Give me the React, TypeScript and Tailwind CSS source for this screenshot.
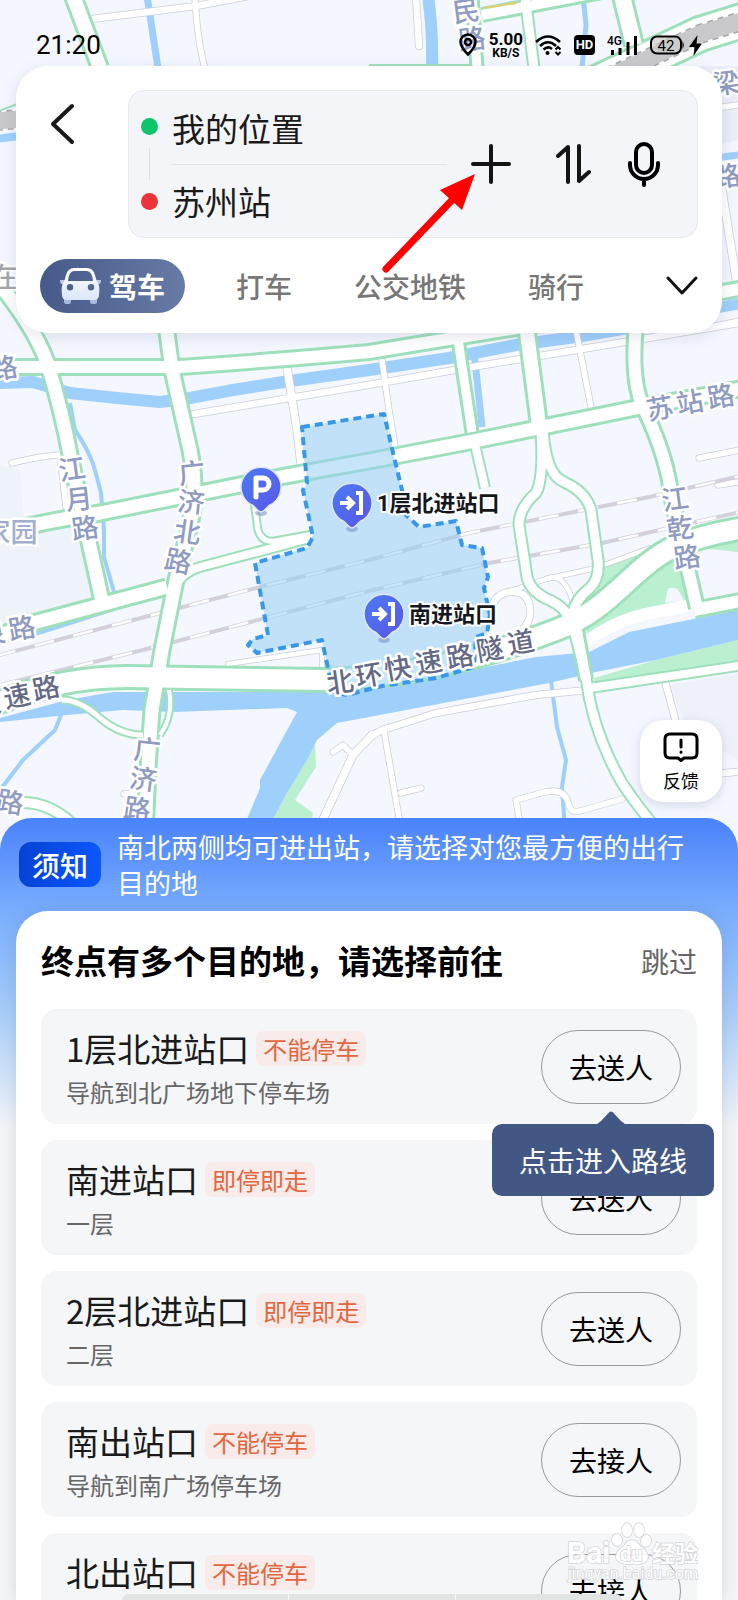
import { useState } from "react";

type Road = { d: string; w: number };

const MAIN_ROADS: Road[] = [
    { d: "M73 -4L100 68", w: 20 },
    { d: "M472 -4L477 68", w: 15 },
    { d: "M482 15L602 -8", w: 16 },
    { d: "M525 -4L534 68", w: 13 },
    { d: "M622 -4L634 45", w: 22 },
    { d: "M590 86L700 34L745 20", w: 38 },
    { d: "M-4 280Q33 325 47 362Q62 410 72 465L104 610", w: 19 },
    { d: "M10 367L180 367Q280 360 369 352L516 328L745 288", w: 18 },
    { d: "M166 325L172 370L190 450Q198 490 190 525L176 580L162 650L152 710L148 767L145 835", w: 19 },
    { d: "M-5 534Q50 520 100 513L180 497L280 477L369 461L469 442L636 408L745 388", w: 19 },
    { d: "M458 338L461 360L472 432", w: 15 },
    { d: "M474 440L485 488", w: 12 },
    { d: "M526 325L539 425", w: 20 },
    { d: "M541 430Q544 478 536 493Q519 508 519 525L527 577Q530 590 545 598Q570 608 574 630L586 677Q592 730 622 783Q640 810 662 835", w: 13 },
    { d: "M543 430Q546 475 564 482Q586 492 591 510L598 560Q600 578 590 588Q574 600 572 618", w: 13 },
    { d: "M575 620L586 680", w: 16 },
    { d: "M636 325Q630 385 646 413Q668 460 672 500L697 608", w: 18 },
    { d: "M-5 704Q60 677 127 677L327 680Q440 675 556 630C610 610 630 570 670 549Q700 535 745 528", w: 26 },
    { d: "M694 610L745 600", w: 18 },
    { d: "M590 688L745 665", w: 12 },
    { d: "M-5 637L33 623L167 587", w: 19 },
    { d: "M172 592Q180 573 200 567L310 538", w: 12 },
    { d: "M253 495L258 530Q262 543 275 541L313 534", w: 9 },
    { d: "M10 803Q50 798 78 830", w: 13 },
    { d: "M62 700Q80 700 100 718Q120 735 143 735", w: 9 },
    { d: "M169 690Q174 715 160 735", w: 8 },
];

const SIDE_ROADS: Road[] = [
    { d: "M92 19L196 6L260 -6", w: 8 },
    { d: "M195 -4Q197 40 205 68", w: 7 },
    { d: "M416 -4L419 46", w: 8 },
    { d: "M715 108L745 104", w: 7 },
    { d: "M722 190L738 290", w: 9 },
    { d: "M715 326L745 320", w: 7 },
    { d: "M12 463Q40 456 60 455L66 507", w: 7 },
    { d: "M194 414L290 398L386 382L466 368L576 350L745 322", w: 8 },
    { d: "M287 368L297 430L301 464", w: 9 },
    { d: "M382 360L389 410L395 447", w: 7 },
    { d: "M576 330L591 407", w: 7 },
    { d: "M699 458L745 449", w: 7 },
    { d: "M718 485L745 481", w: 7 },
    { d: "M366 742Q376 730 392 727L436 713L536 695L588 690", w: 8 },
    { d: "M384 731L402 835", w: 7 },
    { d: "M401 793L421 788", w: 7 },
    { d: "M522 835L516 800L545 792Q564 788 568 802Q570 814 580 811L622 799", w: 7 },
    { d: "M666 685L678 730", w: 8 },
    { d: "M715 774L745 771", w: 8 },
    { d: "M372 735L353 755L318 830", w: 9 },
    { d: "M353 755L343 745L333 752", w: 7 },
    { d: "M492 612Q492 596 508 592Q528 590 530 608Q532 622 520 632", w: 8 },
    { d: "M508 592L546 579Q566 570 575 610", w: 6 },
    { d: "M546 579L596 568L650 548", w: 6 },
    { d: "M228 664L322 650L322 668", w: 6 },
    { d: "M124 794L145 792", w: 7 },
];

const WATER: Road[] = [
    { d: "M147 -4L158 68", w: 7 },
    { d: "M428 -4Q433 30 432 68", w: 12 },
    { d: "M583 -4L586 25L582 68", w: 5 },
    { d: "M-4 139L20 136", w: 8 },
    { d: "M715 158L745 154", w: 7 },
    { d: "M715 308L745 303", w: 11 },
    { d: "M-4 383L33 382L70 393L117 398L160 402L190 398L233 390L283 382L369 370L449 358L516 345L576 337L640 326", w: 12 },
    { d: "M474 352L482 427", w: 7 },
    { d: "M70 403L75 430Q90 452 95 470L101 493L104 530L104 557L114 592", w: 4 },
    { d: "M35 634Q80 620 116 608", w: 4 },
    { d: "M63 710L55 730L23 760L0 790", w: 4 },
    { d: "M551 680L557 727L566 760L562 787L565 830", w: 4 },
];

const RAILS = [
    "M-4 656L160 613L260 587L369 560L469 533L649 497L745 475",
    "M-4 686L143 650L369 591L489 563L602 543L745 511",
];

const STATION =
    "M302 427L384 414L394 457L402 490L406 515L419 527L456 521L462 545L482 548L488 577L484 588L490 615L487 633L476 637L474 667L436 678L382 686L347 695L333 692L322 640L257 653L248 645L253 639L268 635L255 563L307 548L313 537L303 490L307 483Z";

// one glyph per entry: text, x, y, rotation
type Glyph = [string, number, number, number];

const ROAD_LABELS: Glyph[] = [
    ["民", 466, 12, -8],
    ["路", 472, 40, -8],
    ["梁", 726, 84, -8],
    ["路", 727, 177, -8],
    ["路", 4, 369, -10],
    ["江", 72, 470, -8],
    ["月", 79, 500, -6],
    ["路", 85, 529, -8],
    ["广", 192, 474, -6],
    ["济", 191, 503, 6],
    ["北", 187, 533, 8],
    ["路", 178, 562, 12],
    ["苏", 660, 409, -10],
    ["站", 690, 403, -10],
    ["路", 721, 397, -10],
    ["江", 675, 500, -8],
    ["乾", 680, 529, -8],
    ["路", 687, 558, -8],
    ["泉", -8, 635, -10],
    ["路", 22, 629, -10],
    ["广", 147, 751, 6],
    ["济", 143, 780, 8],
    ["路", 137, 810, 8],
    ["路", 10, 803, 10],
];

const EXPRESSWAY_LABELS: Glyph[] = [
    ["快", -13, 705, -12],
    ["速", 17, 697, -12],
    ["路", 46, 689, -12],
    ["北", 340, 683, -8],
    ["环", 369, 676, -10],
    ["快", 398, 669, -10],
    ["速", 429, 663, -10],
    ["路", 460, 657, -10],
    ["隧", 490, 650, -10],
    ["道", 521, 643, -10],
];

const AREA_LABELS: Glyph[] = [
    ["家", -3, 533, 0],
    ["园", 24, 533, 0],
];

const OTHER_TABS = ["打车", "公交地铁", "骑行"];

const DESTINATIONS = [
    { name: "1层北进站口", tag: "不能停车", note: "导航到北广场地下停车场", action: "去送人" },
    { name: "南进站口", tag: "即停即走", note: "一层", action: "去送人" },
    { name: "2层北进站口", tag: "即停即走", note: "二层", action: "去送人" },
    { name: "南出站口", tag: "不能停车", note: "导航到南广场停车场", action: "去接人" },
    { name: "北出站口", tag: "不能停车", note: "导航到北广场停车场", action: "去接人" },
];

function Glyphs({ items, fill }: { items: Glyph[]; fill: string }) {
    return (
        <g
            fill={fill}
            stroke="#fff"
            strokeWidth={5}
            strokeLinejoin="round"
            paintOrder="stroke"
            fontSize={27}
            fontWeight={500}
            textAnchor="middle"
            dominantBaseline="central"
        >
            {items.map(([ch, x, y, r], i) => (
                <text key={i} x={x} y={y} transform={`rotate(${r} ${x} ${y})`}>
                    {ch}
                </text>
            ))}
        </g>
    );
}

function Pin({ x, y, kind }: { x: number; y: number; kind: "parking" | "entry" }) {
    return (
        <g transform={`translate(${x} ${y})`}>
            <ellipse cx="0" cy="26" rx="6" ry="3" fill="#7f93c4" opacity="0.6" />
            <path
                d="M0 25Q-2 25 -8 18.500A20 20 0 1 1 8 18.500Q2 25 0 25Z"
                fill="url(#pin)"
                stroke="#dfe6fb"
                strokeWidth="1.500"
            />
            {kind === "parking" ? (
                <path d="M-5 10V-9H2A5.500 5.500 0 0 1 2 3H-5" fill="none" stroke="#fff" strokeWidth="5" strokeLinejoin="round" strokeLinecap="round" />
            ) : (
                <path d="M-12 0H0M-5 -6L1 0L-5 6M4 -10H9V10H4" fill="none" stroke="#fff" strokeWidth="4" />
            )}
        </g>
    );
}

function MapCanvas() {
    return (
        <svg
            viewBox="0 0 738 840"
            preserveAspectRatio="xMidYMin slice"
            className="absolute inset-x-0 top-0 h-[840px] w-full font-[Roboto,'Noto_Sans_CJK_SC',sans-serif]"
            aria-label="地图"
        >
            <defs>
                <linearGradient id="pin" x1="0" y1="0" x2="1" y2="1">
                    <stop offset="0" stopColor="#4b7cf3" />
                    <stop offset="1" stopColor="#5a55e6" />
                </linearGradient>
            </defs>
            <rect width="738" height="840" fill="#f4f7fe" />
            <path d="M0 465L20 470L25 535L90 525L100 600L0 625Z" fill="#eef2f9" />
            <path d="M666 685L738 674V760L690 730Z" fill="#eef1f8" />
            <path d="M700 66H738V140L700 150Z" fill="#e9eef8" />

            {/* parks */}
            <g fill="#baf0d0">
                <path d="M602 568L672 542L684 565L692 607L640 618L589 640L582 620Z" />
                <path d="M594 678L656 660L738 640V662L592 688Z" />
                <path d="M315 743L316 767L295 800L313 813L308 840H262L287 793Z" />
                <path d="M700 548L738 540V552Z" />
            </g>
            <path d="M668 589Q674 586 678 590Q682 596 684 601L676 602L665 603Z" fill="#f4f7fe" />

            {/* water */}
            <g fill="none" stroke="#9fd0fc" strokeLinejoin="round">
                {WATER.map((r) => (
                    <path key={r.d} d={r.d} strokeWidth={r.w} />
                ))}
            </g>
            <path
                d="M0 718L67 700L113 692L330 692L400 684L536 657L589 652L629 632L738 610V640L656 660L596 672L549 683L512 690L369 717L337 723L317 740L307 760L287 793L262 840H240L247 819L260 788L260 780L297 712L287 708L173 712L123 710L67 715L0 722Z"
                fill="#9fd0fc"
            />

            {/* side streets */}
            <g fill="none" stroke="#ccced8" strokeLinecap="round" strokeLinejoin="round">
                {SIDE_ROADS.map((r) => (
                    <path key={r.d} d={r.d} strokeWidth={r.w} />
                ))}
            </g>
            <g fill="none" stroke="#fff" strokeLinecap="round" strokeLinejoin="round">
                {SIDE_ROADS.map((r) => (
                    <path key={r.d} d={r.d} strokeWidth={r.w - 1.5} />
                ))}
            </g>
            <path d="M586 642Q612 622 645 614L692 605" fill="none" stroke="#fff" strokeWidth="12" />

            {RAILS.map((d) => (
                <g key={d} fill="none">
                    <path d={d} stroke="#d3d0dc" strokeWidth="4" />
                    <path d={d} stroke="#fff" strokeWidth="2.500" strokeDasharray="20 20" />
                </g>
            ))}

            {/* main roads */}
            <g fill="none" stroke="#9fe0bc" strokeLinejoin="round">
                {MAIN_ROADS.map((r) => (
                    <path key={r.d} d={r.d} strokeWidth={r.w} />
                ))}
                <path d="M369 66H480" strokeWidth="4" />
            </g>
            <g fill="none" stroke="#fff" strokeLinejoin="round">
                {MAIN_ROADS.map((r) => (
                    <path key={r.d} d={r.d} strokeWidth={r.w > 13 ? r.w - 6 : r.w - 4} />
                ))}
            </g>
            <path d="M484 8L517 3" stroke="#e6cf72" strokeWidth="2" />
            <g fill="none">
                <path d="M590 86L700 34L745 20M-4 121L20 119" stroke="#fff" strokeWidth="20" />
                <path d="M590 86L700 34L745 20M-4 121L20 119" stroke="#a9a9ad" strokeWidth="20" strokeDasharray="6 5" />
                <path d="M590 86L700 34L745 20M-4 121L20 119" stroke="#c9c9cc" strokeWidth="17" />
                <path d="M-4 112L20 103" stroke="#9fe0bc" strokeWidth="2" />
            </g>

            <path d={STATION} fill="#97cff3" fillOpacity="0.55" />
            <path d={STATION} fill="none" stroke="#3897e8" strokeWidth="4" strokeDasharray="8 5" strokeLinejoin="round" />

            <Glyphs items={ROAD_LABELS} fill="#8f9bc0" />
            <Glyphs items={AREA_LABELS} fill="#a3aecd" />
            <Glyphs items={[["在", 4, 278, 0]]} fill="#a5a5a8" />
            <Glyphs items={EXPRESSWAY_LABELS} fill="#646a86" />

            <Pin x={261} y={487} kind="parking" />
            <Pin x={352} y={503} kind="entry" />
            <Pin x={384} y={614} kind="entry" />
            <g
                fill="#15171c"
                stroke="#fff"
                strokeWidth="4"
                strokeLinejoin="round"
                paintOrder="stroke"
                fontSize="22"
                fontWeight="700"
                dominantBaseline="central"
            >
                <text x="377" y="503">1层北进站口</text>
                <text x="409" y="614">南进站口</text>
            </g>
        </svg>
    );
}

function StatusBar() {
    return (
        <div className="relative flex h-[66px] items-center justify-between px-9 pt-6 font-[Roboto,sans-serif] text-black">
            <span className="text-[26px] leading-8">21:20</span>
            <div className="flex items-center gap-3">
                <svg width="18" height="24" viewBox="0 0 18 24" fill="none" stroke="#000" strokeWidth="2.500">
                    <path d="M9 21.500Q1.500 14 1.500 9A7.500 7.500 0 0 1 16.500 9Q16.500 14 9 21.500Z" />
                    <circle cx="9" cy="9" r="3" />
                </svg>
                <div className="flex flex-col items-center font-bold">
                    <span className="text-[17px] leading-4">5.00</span>
                    <span className="text-[12px] leading-3">KB/S</span>
                </div>
                <svg width="27" height="22" viewBox="0 0 27 22" fill="none" stroke="#000" strokeWidth="2.500">
                    <path d="M1 8Q13 -3 25 8" />
                    <path d="M5 12Q13 4.500 21 12" />
                    <path d="M8.500 15.500Q13 11.500 17 15" />
                    <circle cx="12.500" cy="19" r="2" fill="#000" stroke="none" />
                    <path d="M20.500 15.500L23 13L25.500 15.500M20.500 18L23 20.500L25.500 18" strokeWidth="2" />
                </svg>
                <span className="flex h-5 w-[21px] items-center justify-center rounded bg-black text-[13px] leading-4 font-bold text-white">
                    HD
                </span>
                <svg width="31" height="22" viewBox="0 0 31 22" fill="#000">
                    <text x="0" y="11" fontSize="12" fontWeight="500">4G</text>
                    <path d="M4 16H7V21H4ZM11.500 14H14.500V21H11.500ZM19.500 8H22.500V21H19.500ZM27 2H30V21H27Z" />
                </svg>
                <div className="flex items-center gap-1">
                    <svg width="35" height="20" viewBox="0 0 35 20">
                        <rect x="1" y="1.500" width="30" height="17" rx="6" fill="#ccc" fillOpacity="0.700" stroke="#000" strokeWidth="2" />
                        <path d="M32.500 6V14Q35 10 32.500 6Z" />
                        <text x="16" y="15.500" fontSize="15" textAnchor="middle">42</text>
                    </svg>
                    <svg width="13" height="21" viewBox="0 0 13 21">
                        <path d="M8.500 0L0 12H5.500L4.500 21L13 8.500H7.500Z" />
                    </svg>
                </div>
            </div>
        </div>
    );
}

function CarIcon() {
    return (
        <svg width="41" height="37" viewBox="0 0 41 37">
            <defs>
                <linearGradient id="car" x1="0" y1="0" x2="0" y2="1">
                    <stop offset="0" stopColor="#fff" />
                    <stop offset="1" stopColor="#d9e6fa" />
                </linearGradient>
            </defs>
            <rect x="4" y="29" width="7" height="7" rx="2.500" fill="#a9badb" />
            <rect x="30" y="29" width="7" height="7" rx="2.500" fill="#a9badb" />
            <path d="M0 12H5V16H2Q0 16 0 12ZM41 12H36V16H39Q41 16 41 12Z" fill="#b9c8e6" />
            <path
                fillRule="evenodd"
                fill="url(#car)"
                d="M3 15Q5 12 6 7Q8 0 14 0H27Q33 0 35 7Q36 12 38 15Q40 18 39 27Q39 32 34 32H7Q2 32 2 27Q1 18 3 15ZM8 13H33Q32 3 27 3H14Q9 3 8 13ZM10 16A3.200 3.200 0 1 0 10 22.400A3.200 3.200 0 1 0 10 16ZM31 16A3.200 3.200 0 1 0 31 22.400A3.200 3.200 0 1 0 31 16Z"
            />
        </svg>
    );
}

function RouteHeader() {
    return (
        <header className="relative mx-4 rounded-[32px] bg-white px-6 pt-6 pb-5 shadow-[0_4px_16px_rgba(80,95,130,0.16)]">
            <div className="flex items-start">
                <button aria-label="返回" className="mt-3 ml-2 h-11 w-20">
                    <svg width="32" height="44" viewBox="0 0 32 44" fill="none" stroke="#1a1a1a" strokeWidth="4" strokeLinecap="round" strokeLinejoin="round">
                        <path d="M24 4L5 22L24 40" />
                    </svg>
                </button>
                <div className="flex h-[148px] min-w-0 flex-1 items-center rounded-2xl border border-[#e6e8ec] bg-[#f4f5f9] pr-9 pl-3">
                    <div className="flex w-[17px] flex-col items-center gap-[13px]">
                        <span className="size-[17px] rounded-full bg-[#10c46c]" />
                        <span className="h-8 w-px bg-[#dcdee3]" />
                        <span className="size-[17px] rounded-full bg-[#ee3338]" />
                    </div>
                    <div className="ml-3.5 flex min-w-0 flex-1 flex-col gap-3.5">
                        <input
                            aria-label="起点"
                            defaultValue="我的位置"
                            className="h-11 w-full bg-transparent text-[33px] leading-11 text-[#1a1a1a] outline-none"
                        />
                        <hr className="border-[#e4e5ea]" />
                        <input
                            aria-label="终点"
                            defaultValue="苏州站"
                            className="h-11 w-full bg-transparent text-[33px] leading-11 text-[#1a1a1a] outline-none"
                        />
                    </div>
                    <div className="ml-6 flex items-center">
                        <button aria-label="添加途经点">
                            <svg width="40" height="40" viewBox="0 0 40 40" stroke="#141414" strokeWidth="4" strokeLinecap="round">
                                <path d="M20 2V38M2 20H38" />
                            </svg>
                        </button>
                        <button aria-label="交换起终点" className="ml-11">
                            <svg width="36" height="40" viewBox="0 0 36 40" fill="none" stroke="#141414" strokeWidth="4" strokeLinecap="round" strokeLinejoin="round">
                                <path d="M13 38V3L3 12M24 2V37L34 28" />
                            </svg>
                        </button>
                        <button aria-label="语音输入" className="ml-9">
                            <svg width="34" height="46" viewBox="0 0 34 46" fill="none" stroke="#000" strokeWidth="4" strokeLinecap="round">
                                <rect x="9" y="3" width="16" height="29" rx="8" />
                                <path d="M3 22V24A14 14 0 0 0 31 24V22M17 38V44" />
                            </svg>
                        </button>
                    </div>
                </div>
            </div>

            <nav className="mt-[21px] flex items-center">
                <button className="flex h-[54px] items-center gap-2 rounded-full bg-linear-to-r from-[#465a89] to-[#687ba5] px-5 text-[28px] font-bold text-white">
                    <CarIcon />
                    驾车
                </button>
                <div className="ml-[51px] flex gap-[62px]">
                    {OTHER_TABS.map((tab) => (
                        <button key={tab} className="h-[54px] text-[28px] font-medium text-[#777]">
                            {tab}
                        </button>
                    ))}
                </div>
                <button aria-label="更多出行方式" className="ml-auto">
                    <svg width="32" height="20" viewBox="0 0 32 20" fill="none" stroke="#111" strokeWidth="3" strokeLinecap="round" strokeLinejoin="round">
                        <path d="M2 2L16 17L30 2" />
                    </svg>
                </button>
            </nav>
        </header>
    );
}

function Watermark() {
    return (
        <svg
            width="136"
            height="66"
            viewBox="0 0 136 66"
            className="pointer-events-none absolute right-9 bottom-3.5"
            fill="#fff"
            stroke="#cfd1d4"
            strokeWidth="1.500"
            paintOrder="stroke"
            opacity="0.900"
        >
            <ellipse cx="61" cy="10" rx="5" ry="7" />
            <ellipse cx="73" cy="10" rx="5" ry="7" />
            <ellipse cx="51" cy="20" rx="5" ry="6" transform="rotate(-15 51 20)" />
            <ellipse cx="80" cy="21" rx="5" ry="6" transform="rotate(15 80 21)" />
            <path d="M66 20Q71 20 74 26Q83 32 82 38Q80 45 66 44Q52 45 50 38Q49 32 58 26Q61 20 66 20Z" />
            <g className="font-[Roboto,'Noto_Sans_CJK_SC',sans-serif]">
                <text x="1" y="43" fontSize="30" fontWeight="700">Bai</text>
                <text x="54" y="41" fontSize="20" fontWeight="700">du</text>
                <text x="86" y="42" fontSize="23" fontWeight="700">经验</text>
                <text x="2" y="59" fontSize="16">jingyan.baidu.com</text>
            </g>
        </svg>
    );
}

export default function App() {
    const [showHint, setShowHint] = useState(true);

    return (
        <main className="relative flex h-screen flex-col overflow-hidden bg-[#f3f5f8] font-['Noto_Sans_CJK_SC',sans-serif]">
            <MapCanvas />
            <StatusBar />
            <RouteHeader />

            <div className="relative flex h-[485px] shrink-0 items-end justify-end px-4 pb-4">
                <button className="flex size-[82px] flex-col items-center justify-center gap-2 rounded-3xl bg-white shadow-[0_3px_12px_rgba(80,95,130,0.2)]">
                    <svg width="36" height="30" viewBox="0 0 36 30" fill="none" stroke="#000" strokeWidth="3" strokeLinejoin="round" strokeLinecap="round">
                        <path d="M7 2H29Q34 2 34 7V21Q34 26 29 26H21L18 28.500L15 26H7Q2 26 2 21V7Q2 2 7 2Z" />
                        <path d="M18 8V15M18 20V20.200" />
                    </svg>
                    <span className="text-[18px] leading-5 text-black">反馈</span>
                </button>
            </div>

            {/* destination sheet */}
            <section className="relative flex min-h-0 flex-1 flex-col rounded-t-[32px] bg-[linear-gradient(to_bottom,#4a82fb_0,#79adfd_92px,#a5ccf9_190px,#f3f5f8_310px)]">
                <div className="flex h-[93px] items-center gap-4 pr-10 pl-[19px]">
                    <span className="flex h-[45px] w-[82px] shrink-0 items-center justify-center rounded-xl bg-linear-to-r from-[#0742d4] to-[#0b57fd] text-[28px] font-medium text-white">
                        须知
                    </span>
                    <p className="text-[27px] leading-9 text-white">
                        南北两侧均可进出站，请选择对您最方便的出行目的地
                    </p>
                </div>

                <div className="mx-4 min-h-0 flex-1 rounded-t-[32px] bg-white px-[25px] pt-[30px] shadow-[0_0_16px_rgba(80,90,110,0.18)]">
                    <div className="flex h-10 items-center justify-between">
                        <h1 className="text-[33px] font-bold text-black">终点有多个目的地，请选择前往</h1>
                        <button className="text-[28px] text-[#666]">跳过</button>
                    </div>
                    <ul className="mt-7 flex flex-col gap-4">
                        {DESTINATIONS.map((item, i) => (
                            <li
                                key={item.name}
                                className="flex items-center justify-between rounded-2xl bg-[#f5f6f8] pr-4 pl-[25px]"
                            >
                                <div className="pt-[21px] pb-4">
                                    <div className="flex h-9 items-center gap-[7px]">
                                        <h2 className="text-[33px] leading-9 text-[#1a1a1a]">{item.name}</h2>
                                        <span className="h-[35px] rounded-lg bg-[#f8ebe9] px-[7px] text-[24px] leading-[35px] text-[#e2663e]">
                                            {item.tag}
                                        </span>
                                    </div>
                                    <p className="mt-2.5 text-[24px] leading-8 text-[#666]">{item.note}</p>
                                </div>
                                <div className="relative">
                                    <button
                                        onClick={() => setShowHint(false)}
                                        className="h-[74px] w-[140px] rounded-full border border-[#999] text-[28px] text-black"
                                    >
                                        {item.action}
                                    </button>
                                    {i === 0 && showHint && (
                                        <div
                                            role="tooltip"
                                            className="absolute top-[94px] -right-[33px] z-10 flex h-[72px] w-[222px] items-center justify-center rounded-[10px] bg-[#425784] text-[28px] text-white"
                                        >
                                            <svg width="34" height="14" viewBox="0 0 34 14" className="absolute -top-[13px] right-[86px]" fill="#425784">
                                                <path d="M0 14Q4 13 7 10L15 1.500Q17 -0.500 19 1.500L27 10Q30 13 34 14Z" />
                                            </svg>
                                            点击进入路线
                                        </div>
                                    )}
                                </div>
                            </li>
                        ))}
                    </ul>
                </div>
            </section>

            {/* bottom handle strip */}
            <div className="absolute bottom-0 left-[122px] flex h-1.5 w-[500px] gap-px">
                <span className="flex-1 rounded-tl-md bg-[#e2e4e4]" />
                <span className="flex-1 bg-[#e2e4e4]" />
                <span className="flex-1 rounded-tr-md bg-[#e2e4e4]" />
            </div>
            <Watermark />

            {/* pointer to the add-stop button */}
            <svg width="100" height="104" viewBox="0 0 100 104" className="pointer-events-none absolute top-[172px] left-[380px]">
                <path d="M6 97L75 25" stroke="#fe0000" strokeWidth="7" strokeLinecap="round" />
                <path d="M95 2L60 18L82 38Z" fill="#fe0000" />
            </svg>
        </main>
    );
}
